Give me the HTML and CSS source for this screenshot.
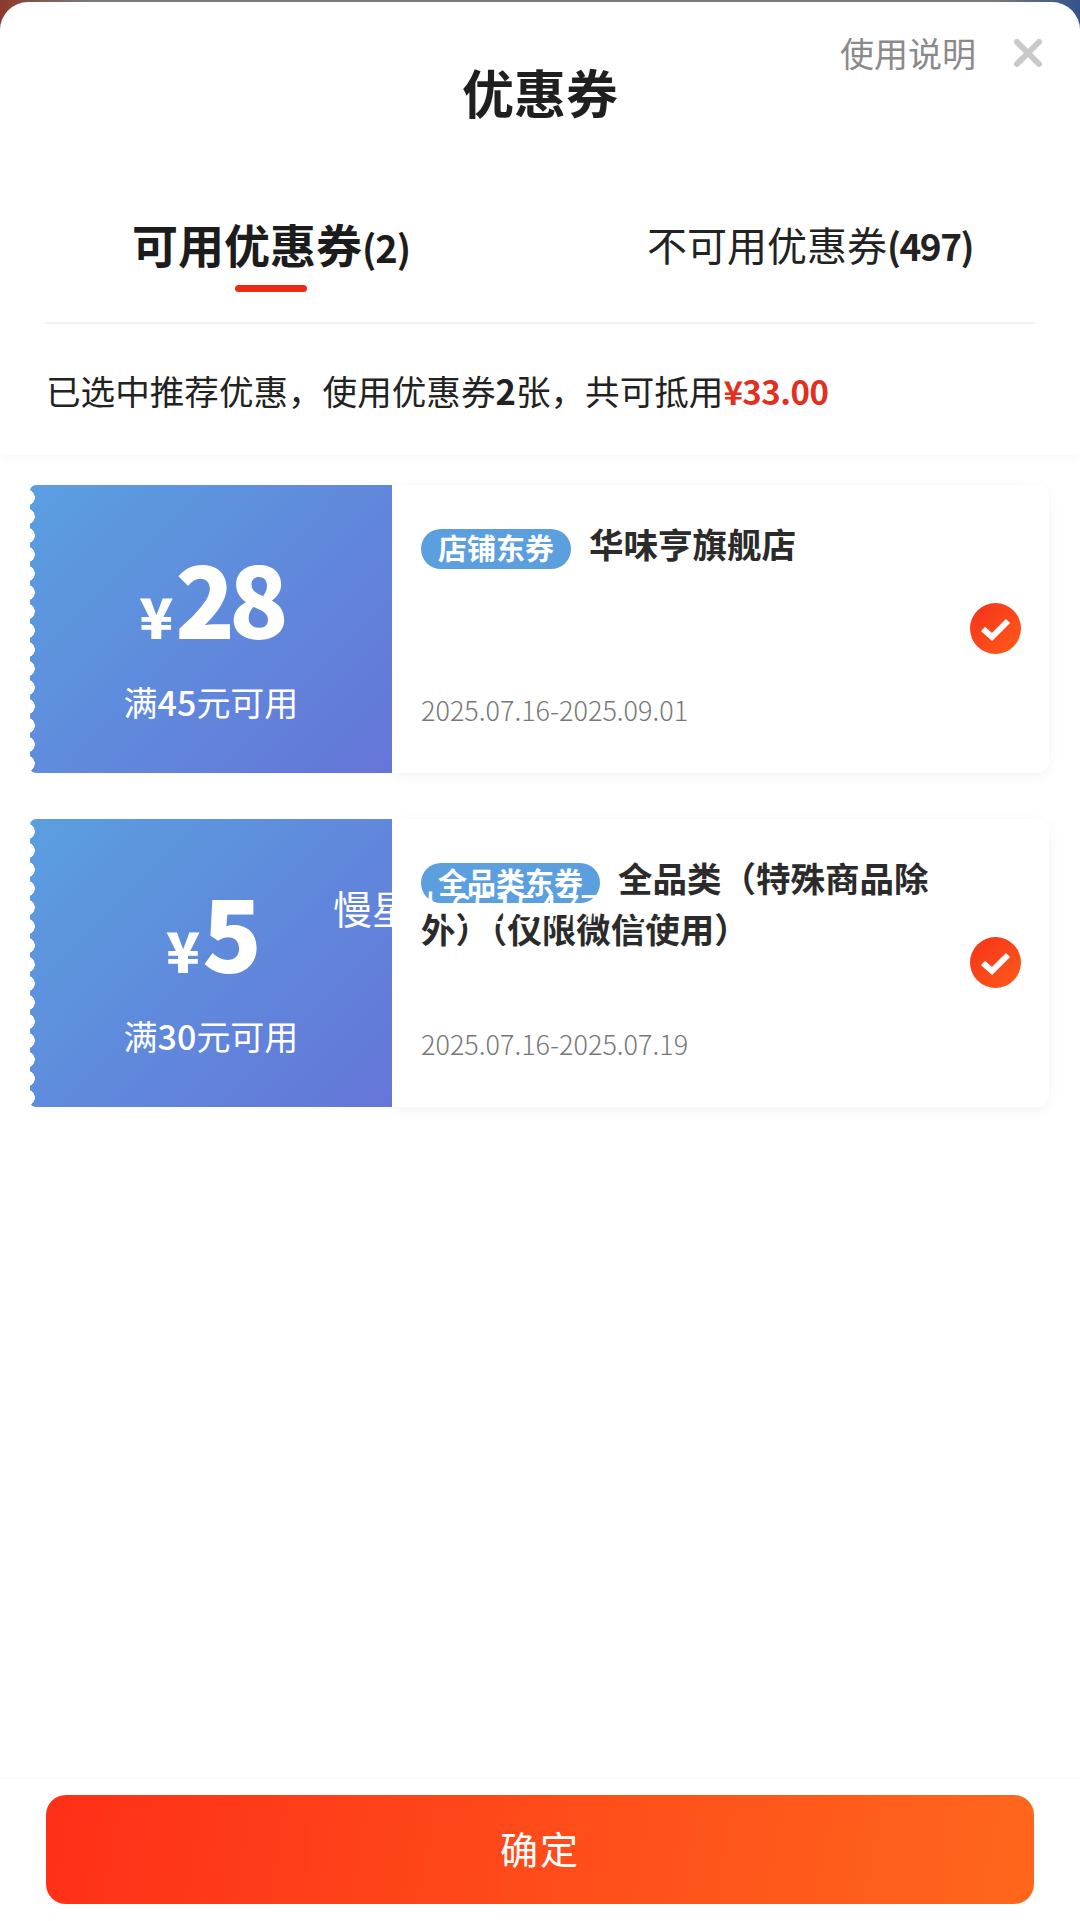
FILE: index.html
```html
<!DOCTYPE html>
<html lang="zh-CN">
<head>
    <meta charset="UTF-8">
    <meta name="viewport" content="width=device-width, initial-scale=1.0">
    <title>优惠券</title>
    <link rel="stylesheet" href="styles.css">
</head>
<body>
    <div class="sheet">
        <header class="sheet-head">
            <div class="title-row">
                <h1 class="title">优惠券</h1>
                <div class="head-actions">
                    <span class="help">使用说明</span>
                    <svg class="close" viewBox="0 0 28 28" width="28" height="28">
                        <path d="M3 3 L25 25 M25 3 L3 25" stroke="#c9c9c9" stroke-width="6" stroke-linecap="round" fill="none"/>
                    </svg>
                </div>
            </div>
            <div class="tabs">
                <div class="tab tab-active">
                    <span>可用优惠券<b class="num">(2)</b></span>
                    <i class="tab-line"></i>
                </div>
                <div class="tab">
                    <span>不可用优惠券<b class="num">(497)</b></span>
                </div>
            </div>
            <p class="summary">已选中推荐优惠，使用优惠券<b class="num">2</b>张，共可抵用<b class="num total">¥33.00</b></p>
        </header>

        <main class="coupon-list">
            <div class="coupon">
                <div class="coupon-left">
                    <div class="price"><span class="yen">¥</span><span class="amount">28</span></div>
                    <div class="limit">满<b class="num">45</b>元可用</div>
                </div>
                <div class="coupon-body">
                    <div class="info">
                        <div class="name"><span class="badge">店铺东券</span>华味亨旗舰店</div>
                        <div class="date">2025.07.16-2025.09.01</div>
                    </div>
                    <svg class="check" viewBox="0 0 51 51" width="51" height="51">
                        <defs>
                            <linearGradient id="checkFill" x1="0" y1="0" x2="1" y2="1">
                                <stop offset="0" stop-color="#f5311a"/>
                                <stop offset="1" stop-color="#ff5c1a"/>
                            </linearGradient>
                        </defs>
                        <circle cx="25.5" cy="25.5" r="25.5" fill="url(#checkFill)"/>
                        <path d="M13 26 L22 34 L38 18" stroke="#fff" stroke-width="6" fill="none" stroke-linejoin="miter"/>
                    </svg>
                </div>
            </div>

            <div class="coupon">
                <div class="coupon-left">
                    <div class="price"><span class="yen">¥</span><span class="amount">5</span></div>
                    <div class="limit">满<b class="num">30</b>元可用</div>
                </div>
                <div class="coupon-body">
                    <div class="info">
                        <div class="name"><span class="badge">全品类东券</span>全品类（特殊商品除外）（仅限微信使用）</div>
                        <div class="date">2025.07.16-2025.07.19</div>
                    </div>
                    <svg class="check" viewBox="0 0 51 51" width="51" height="51">
                        <circle cx="25.5" cy="25.5" r="25.5" fill="url(#checkFill)"/>
                        <path d="M13 26 L22 34 L38 18" stroke="#fff" stroke-width="6" fill="none" stroke-linejoin="miter"/>
                    </svg>
                </div>
            </div>
        </main>

        <div class="watermark">慢星人6515477703</div>

        <footer class="sheet-foot">
            <button class="confirm">确定</button>
        </footer>
    </div>
</body>
</html>
```

FILE: styles.css
```css
* {
    box-sizing: border-box;
}
html, body {
    margin: 0;
    height: 100%;
    overflow: hidden;
}
body {
    font-family: "Noto Sans CJK SC", "Noto Sans", sans-serif;
    color: #1f1f1f;
    /* the page behind the sheet only shows in the top corners */
    background: linear-gradient(90deg, #8c3a2e 0, #7a7a7a 8%, #7a7a7a 92%, #34528f 100%);
    padding-top: 2px;
}
.num {
    font-weight: 700;
}

.sheet {
    position: relative;
    height: 1919px;
    background: #fff;
    border-radius: 28px 28px 0 0;
    display: flex;
    flex-direction: column;
}

/* Header */
.sheet-head {
    padding-top: 31px;
    box-shadow: 0 4px 12px rgba(0, 0, 0, 0.03);
}
.title-row {
    display: grid;
    grid-template-columns: 1fr auto 1fr;
    padding: 0 38px;
}
.title {
    grid-column: 2;
    margin: 29px 0 0;
    font-size: 52px;
    line-height: 60px;
    font-weight: 700;
}
.head-actions {
    grid-column: 3;
    display: flex;
    justify-content: flex-end;
    align-items: center;
    align-self: start;
    gap: 38px;
    height: 40px;
}
.help {
    font-size: 34px;
    line-height: 40px;
    color: #8a8a8a;
}

/* Tabs */
.tabs {
    display: flex;
    justify-content: space-between;
    margin: 93px 45px 0;
    padding: 0 62px 30px 87px;
    border-bottom: 2px solid #f2f2f2;
}
.tab {
    margin-top: 2px;
    font-size: 40px;
    line-height: 54px;
    color: #222;
}
.tab .num {
    font-size: 37px;
    letter-spacing: -1.5px;
}
.tab-active {
    display: flex;
    flex-direction: column;
    align-items: center;
    margin-top: 0;
    font-size: 46px;
    line-height: 56px;
    font-weight: 700;
    color: #1c1c1c;
}
.tab-active .num {
    font-size: 38px;
    letter-spacing: -1px;
}
.tab-line {
    width: 72px;
    height: 7px;
    margin-top: 10px;
    border-radius: 4px;
    background: #ee2a16;
}
.summary {
    margin: 0;
    padding: 42px 46px 40px;
    font-size: 34.6px;
    line-height: 48px;
    color: #222;
}
.total {
    font-size: 33px;
    letter-spacing: -0.5px;
    color: #e2301f;
}

/* Coupons */
.coupon-list {
    display: flex;
    flex-direction: column;
    gap: 46px;
    padding: 30px 31px 0 30px;
}
.coupon {
    display: flex;
    height: 288px;
}
.coupon-left {
    position: relative;
    width: 362px;
    display: flex;
    flex-direction: column;
    align-items: center;
    background: linear-gradient(135deg, #5a9fe0, #6575d8);
    border-radius: 6px 0 0 6px;
    color: #fff;
}
/* scalloped left edge */
.coupon-left::before {
    content: "";
    position: absolute;
    left: 0;
    top: 0;
    bottom: 0;
    width: 5px;
    background: radial-gradient(circle 8.1px at -3.1px 50%, #fff 94%, rgba(255, 255, 255, 0) 100%) 0 3px / 5px 19px repeat-y;
}
.price {
    display: flex;
    align-items: baseline;
    margin-top: 52px;
    height: 118px;
    font-weight: 900;
}
.yen {
    font-size: 56px;
    line-height: 118px;
    margin-right: 2px;
}
.amount {
    font-size: 98px;
    line-height: 118px;
    letter-spacing: -6px;
}
.limit {
    margin-top: 25px;
    font-size: 34px;
    line-height: 44px;
}
.limit .num {
    font-weight: 500;
}

.coupon-body {
    flex: 1;
    display: flex;
    align-items: center;
    padding: 33px 28px 45px 29px;
    border-radius: 0 12px 12px 0;
    box-shadow: 0 3px 14px rgba(0, 0, 0, 0.05);
}
.info {
    flex: 1;
    align-self: stretch;
    display: flex;
    flex-direction: column;
    justify-content: space-between;
    padding-right: 20px;
}
.name {
    font-size: 34.5px;
    line-height: 50px;
    font-weight: 700;
    color: #2b2b2b;
}
.badge {
    display: inline-block;
    height: 40px;
    margin-right: 18px;
    padding: 0 17px;
    border-radius: 20px;
    background: #5b9fdf;
    color: #fff;
    font-size: 29px;
    line-height: 36px;
    vertical-align: -2px;
}
.date {
    font-size: 27px;
    line-height: 36px;
    font-weight: 300;
    color: #777;
}
.check {
    flex: none;
    margin-top: 10px;
}

.watermark {
    position: absolute;
    left: 333px;
    top: 877px;
    font-size: 39px;
    line-height: 56px;
    font-weight: 400;
    color: #fff;
    white-space: nowrap;
}

/* Footer */
.sheet-foot {
    margin-top: auto;
    padding: 16px 46px 17px;
    border-top: 2px solid #fafafa;
}
.confirm {
    display: block;
    width: 100%;
    height: 109px;
    padding: 0 0 4px;
    border: none;
    border-radius: 20px;
    background: linear-gradient(100deg, #ff2f18, #ff671c);
    color: #fff;
    font-family: inherit;
    font-size: 38px;
    letter-spacing: 2px;
}
```
